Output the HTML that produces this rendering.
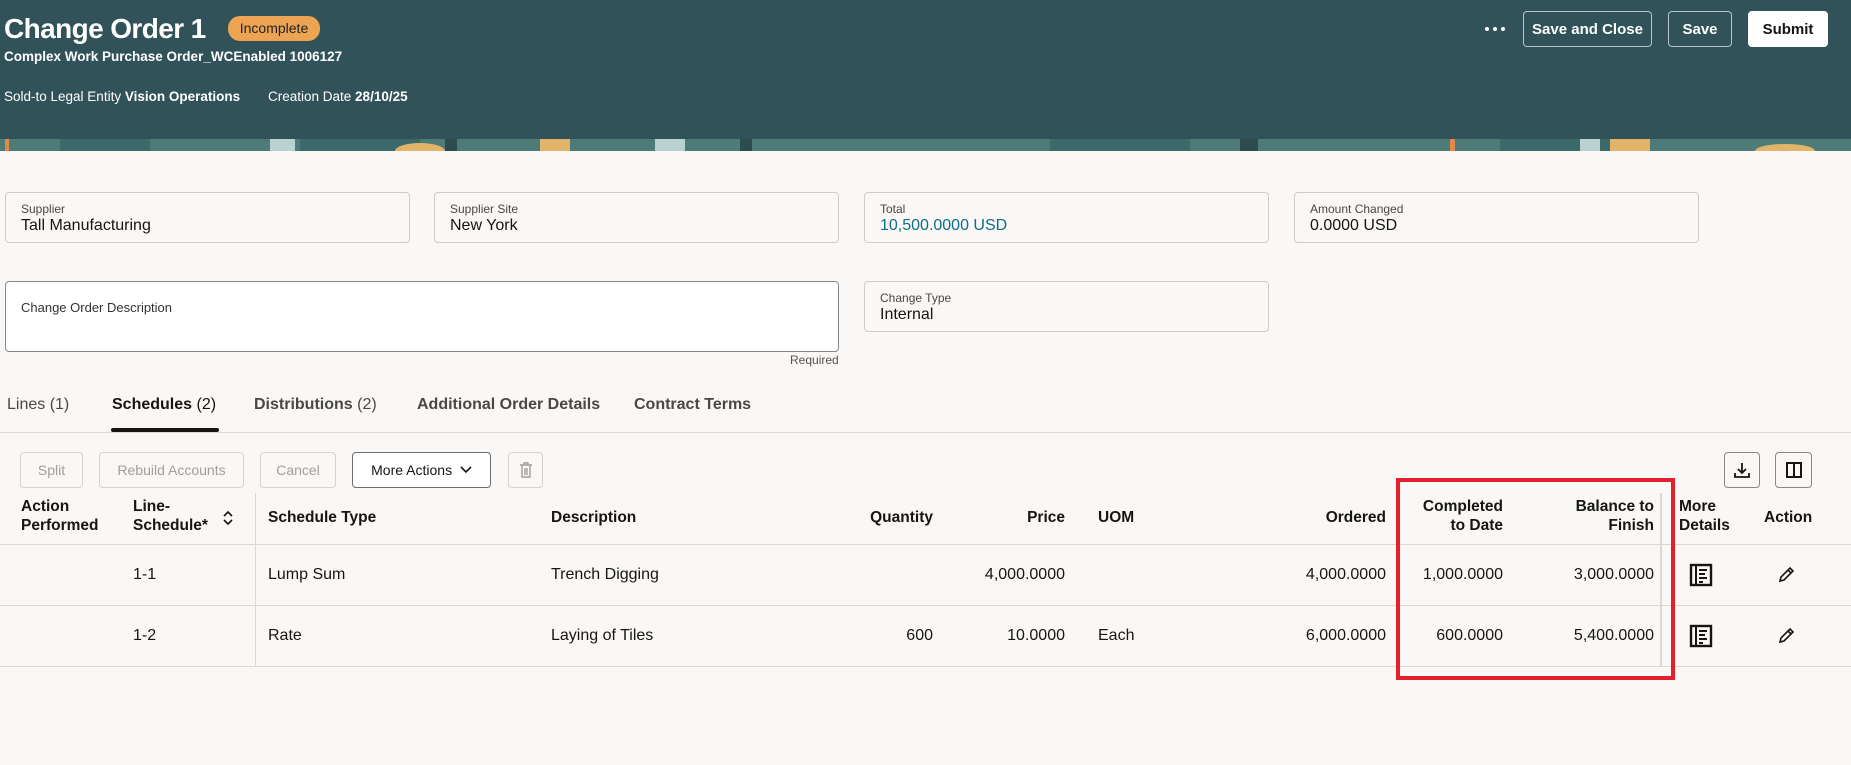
<!DOCTYPE html>
<html><head><meta charset="utf-8"><style>
*{box-sizing:border-box;margin:0;padding:0}
body{width:1851px;height:765px;background:#f9f8f6;font-family:"Liberation Sans",sans-serif;color:#161513;position:relative;overflow:hidden}
.a{position:absolute;white-space:nowrap}
.hdr{position:absolute;left:0;top:0;width:1851px;height:151px;background:#325259}
.btn{position:absolute;border:1px solid #b9c4c6;border-radius:4px;color:#fff;font-weight:bold;font-size:15px;display:flex;align-items:center;justify-content:center}
.card{position:absolute;border:1px solid #cfcdca;border-radius:4px;background:#f9f8f6}
.card .l{position:absolute;left:15px;top:9px;font-size:12px;color:#4a4845}
.card .v{position:absolute;left:15px;top:24px;font-size:16px}
.tab{position:absolute;top:396px;font-size:16px;color:#4a4845;font-weight:bold}
.tab span{font-weight:normal}
.tb{position:absolute;top:452px;height:36px;border:1px solid #d6d3cf;border-radius:4px;color:#a19f9c;font-size:14px;display:flex;align-items:center;justify-content:center}
.th{position:absolute;font-weight:bold;font-size:15.5px;line-height:19px}
.td{position:absolute;font-size:16px}
.r{text-align:right}
</style></head><body>
<div class="hdr"></div>
<svg class="a" style="left:0;top:139px" width="1851" height="12">
<rect width="1851" height="12" fill="#4e7a78"/>
<g fill="#3c6a6a"><rect x="60" y="0" width="90" height="12"/><rect x="300" y="0" width="120" height="12"/><rect x="1050" y="0" width="140" height="12"/><rect x="1500" y="0" width="110" height="12"/></g>
<g fill="#e2b46a"><ellipse cx="420" cy="12" rx="25" ry="8"/><rect x="540" y="0" width="30" height="12"/><rect x="1610" y="0" width="40" height="12"/><ellipse cx="1785" cy="12" rx="30" ry="7"/></g>
<g fill="#b8d2d2"><rect x="270" y="0" width="25" height="12"/><rect x="655" y="0" width="30" height="12"/><rect x="1580" y="0" width="20" height="12"/></g>
<g fill="#e08a4a"><rect x="5" y="0" width="4" height="12"/><rect x="740" y="0" width="4" height="12"/><rect x="1450" y="0" width="5" height="12"/></g>
<g fill="#2d4c50"><rect x="445" y="0" width="12" height="12"/><rect x="740" y="0" width="12" height="12"/><rect x="1240" y="0" width="18" height="12"/></g>
</svg>
<div class="a" style="left:4px;top:13px;font-size:28px;font-weight:bold;color:#fff;letter-spacing:-0.6px">Change Order 1</div>
<div class="a" style="left:228px;top:16px;width:92px;height:25px;border-radius:12px;background:#eda452;color:#222;font-size:14px;text-align:center;line-height:25px">Incomplete</div>
<div class="a" style="left:4px;top:49px;font-size:13.5px;font-weight:bold;color:#fff">Complex Work Purchase Order_WCEnabled 1006127</div>
<div class="a" style="left:4px;top:89px;font-size:13.5px;color:#fff">Sold-to Legal Entity <b>Vision Operations</b></div>
<div class="a" style="left:268px;top:89px;font-size:13.5px;color:#fff">Creation Date <b>28/10/25</b></div>
<svg class="a" style="left:1484px;top:26px" width="22" height="6"><circle cx="3" cy="3" r="2" fill="#fff"/><circle cx="11" cy="3" r="2" fill="#fff"/><circle cx="19" cy="3" r="2" fill="#fff"/></svg>
<div class="btn" style="left:1523px;top:11px;width:129px;height:36px">Save and Close</div>
<div class="btn" style="left:1668px;top:11px;width:64px;height:36px">Save</div>
<div class="btn" style="left:1748px;top:11px;width:80px;height:36px;background:#fff;color:#161513;border-color:#fff">Submit</div>

<div class="card" style="left:5px;top:192px;width:405px;height:51px"><div class="l">Supplier</div><div class="v">Tall Manufacturing</div></div>
<div class="card" style="left:434px;top:192px;width:405px;height:51px"><div class="l">Supplier Site</div><div class="v">New York</div></div>
<div class="card" style="left:864px;top:192px;width:405px;height:51px"><div class="l">Total</div><div class="v" style="color:#0f6d88">10,500.0000 USD</div></div>
<div class="card" style="left:1294px;top:192px;width:405px;height:51px"><div class="l">Amount Changed</div><div class="v">0.0000 USD</div></div>
<div class="card" style="left:5px;top:281px;width:834px;height:71px;background:#fff;border-color:#8a8886"><div class="l" style="top:18px;font-size:13px;color:#333">Change Order Description</div></div>
<div class="a" style="left:790px;top:353px;font-size:12px;color:#55524f">Required</div>
<div class="card" style="left:864px;top:281px;width:405px;height:51px"><div class="l">Change Type</div><div class="v">Internal</div></div>

<div class="tab" style="left:7px;font-weight:normal">Lines <span>(1)</span></div>
<div class="tab" style="left:112px;color:#161513">Schedules <span>(2)</span></div>
<div class="tab" style="left:254px">Distributions <span>(2)</span></div>
<div class="tab" style="left:417px">Additional Order Details</div>
<div class="tab" style="left:634px">Contract Terms</div>
<div class="a" style="left:111px;top:428px;width:108px;height:4px;background:#161513;border-radius:2px"></div>
<div class="a" style="left:0;top:432px;width:1851px;height:1px;background:#dcd9d5"></div>

<div class="tb" style="left:20px;width:63px">Split</div>
<div class="tb" style="left:99px;width:145px">Rebuild Accounts</div>
<div class="tb" style="left:260px;width:76px">Cancel</div>
<div class="tb" style="left:352px;width:139px;background:#fff;border-color:#6f6d6a;color:#161513">More Actions&nbsp;&nbsp;<svg width="12" height="8"><path d="M1 1l5 5 5-5" stroke="#161513" stroke-width="1.6" fill="none"/></svg></div>
<div class="tb" style="left:508px;width:35px"><svg width="16" height="18"><path d="M2 4h12M6 4V2h4v2M4 4v12h8V4M7 7v7M9 7v7" stroke="#a19f9c" stroke-width="1.4" fill="none"/></svg></div>
<div class="tb" style="left:1724px;width:36px;border-color:#8a8886"><svg width="18" height="18"><path d="M9 2v10M5 8l4 4 4-4M2 12v4h14v-4" stroke="#161513" stroke-width="1.8" fill="none"/></svg></div>
<div class="tb" style="left:1775px;width:37px;border-color:#8a8886"><svg width="18" height="18"><rect x="2" y="2" width="14" height="14" stroke="#161513" stroke-width="2" fill="none"/><path d="M9 2v14" stroke="#161513" stroke-width="2"/></svg></div>

<div class="th" style="left:21px;top:497px">Action<br>Performed</div>
<div class="th" style="left:133px;top:497px">Line-<br>Schedule*</div>
<svg class="a" style="left:222px;top:510px" width="12" height="16"><path d="M2 6l4-4 4 4M2 10l4 4 4-4" stroke="#161513" stroke-width="1.6" fill="none"/></svg>
<div class="th" style="left:268px;top:508px">Schedule Type</div>
<div class="th" style="left:551px;top:508px">Description</div>
<div class="th r" style="left:833px;width:100px;top:508px">Quantity</div>
<div class="th r" style="left:965px;width:100px;top:508px">Price</div>
<div class="th" style="left:1098px;top:508px">UOM</div>
<div class="th r" style="left:1286px;width:100px;top:508px">Ordered</div>
<div class="th r" style="left:1403px;width:100px;top:497px">Completed<br>to Date</div>
<div class="th r" style="left:1554px;width:100px;top:497px">Balance to<br>Finish</div>
<div class="th" style="left:1679px;top:497px">More<br>Details</div>
<div class="th" style="left:1764px;top:508px">Action</div>

<div class="a" style="left:0;top:544px;width:1851px;height:1px;background:#dcd9d5"></div>
<div class="a" style="left:0;top:605px;width:1851px;height:1px;background:#dcd9d5"></div>
<div class="a" style="left:0;top:666px;width:1851px;height:1px;background:#dcd9d5"></div>
<div class="a" style="left:255px;top:493px;width:1px;height:173px;background:#dcd9d5"></div>
<div class="a" style="left:1660px;top:493px;width:2px;height:173px;background:#dcd9d5"></div>

<div class="td" style="left:133px;top:566px">1-1</div>
<div class="td" style="left:268px;top:566px">Lump Sum</div>
<div class="td" style="left:551px;top:566px">Trench Digging</div>
<div class="td r" style="left:915px;width:150px;top:566px">4,000.0000</div>
<div class="td r" style="left:1236px;width:150px;top:566px">4,000.0000</div>
<div class="td r" style="left:1353px;width:150px;top:566px">1,000.0000</div>
<div class="td r" style="left:1504px;width:150px;top:566px">3,000.0000</div>

<div class="td" style="left:133px;top:627px">1-2</div>
<div class="td" style="left:268px;top:627px">Rate</div>
<div class="td" style="left:551px;top:627px">Laying of Tiles</div>
<div class="td r" style="left:833px;width:100px;top:627px">600</div>
<div class="td r" style="left:915px;width:150px;top:627px">10.0000</div>
<div class="td" style="left:1098px;top:627px">Each</div>
<div class="td r" style="left:1236px;width:150px;top:627px">6,000.0000</div>
<div class="td r" style="left:1353px;width:150px;top:627px">600.0000</div>
<div class="td r" style="left:1504px;width:150px;top:627px">5,400.0000</div>

<svg class="a" style="left:1689px;top:563px" width="24" height="24"><rect x="2" y="2" width="20" height="20" stroke="#161513" stroke-width="2.4" fill="none"/><path d="M7 2v20M10 7h8M10 11h6M10 15h8M10 19h4" stroke="#161513" stroke-width="2"/></svg>
<svg class="a" style="left:1689px;top:624px" width="24" height="24"><rect x="2" y="2" width="20" height="20" stroke="#161513" stroke-width="2.4" fill="none"/><path d="M7 2v20M10 7h8M10 11h6M10 15h8M10 19h4" stroke="#161513" stroke-width="2"/></svg>
<svg class="a" style="left:1777px;top:566px" width="18" height="18"><path d="M3 15l1-4 9-9 3 3-9 9zM11 4l3 3" stroke="#161513" stroke-width="1.6" fill="none"/></svg>
<svg class="a" style="left:1777px;top:627px" width="18" height="18"><path d="M3 15l1-4 9-9 3 3-9 9zM11 4l3 3" stroke="#161513" stroke-width="1.6" fill="none"/></svg>

<div class="a" style="left:1396px;top:478px;width:279px;height:202px;border:4px solid #e5202a"></div>
</body></html>
